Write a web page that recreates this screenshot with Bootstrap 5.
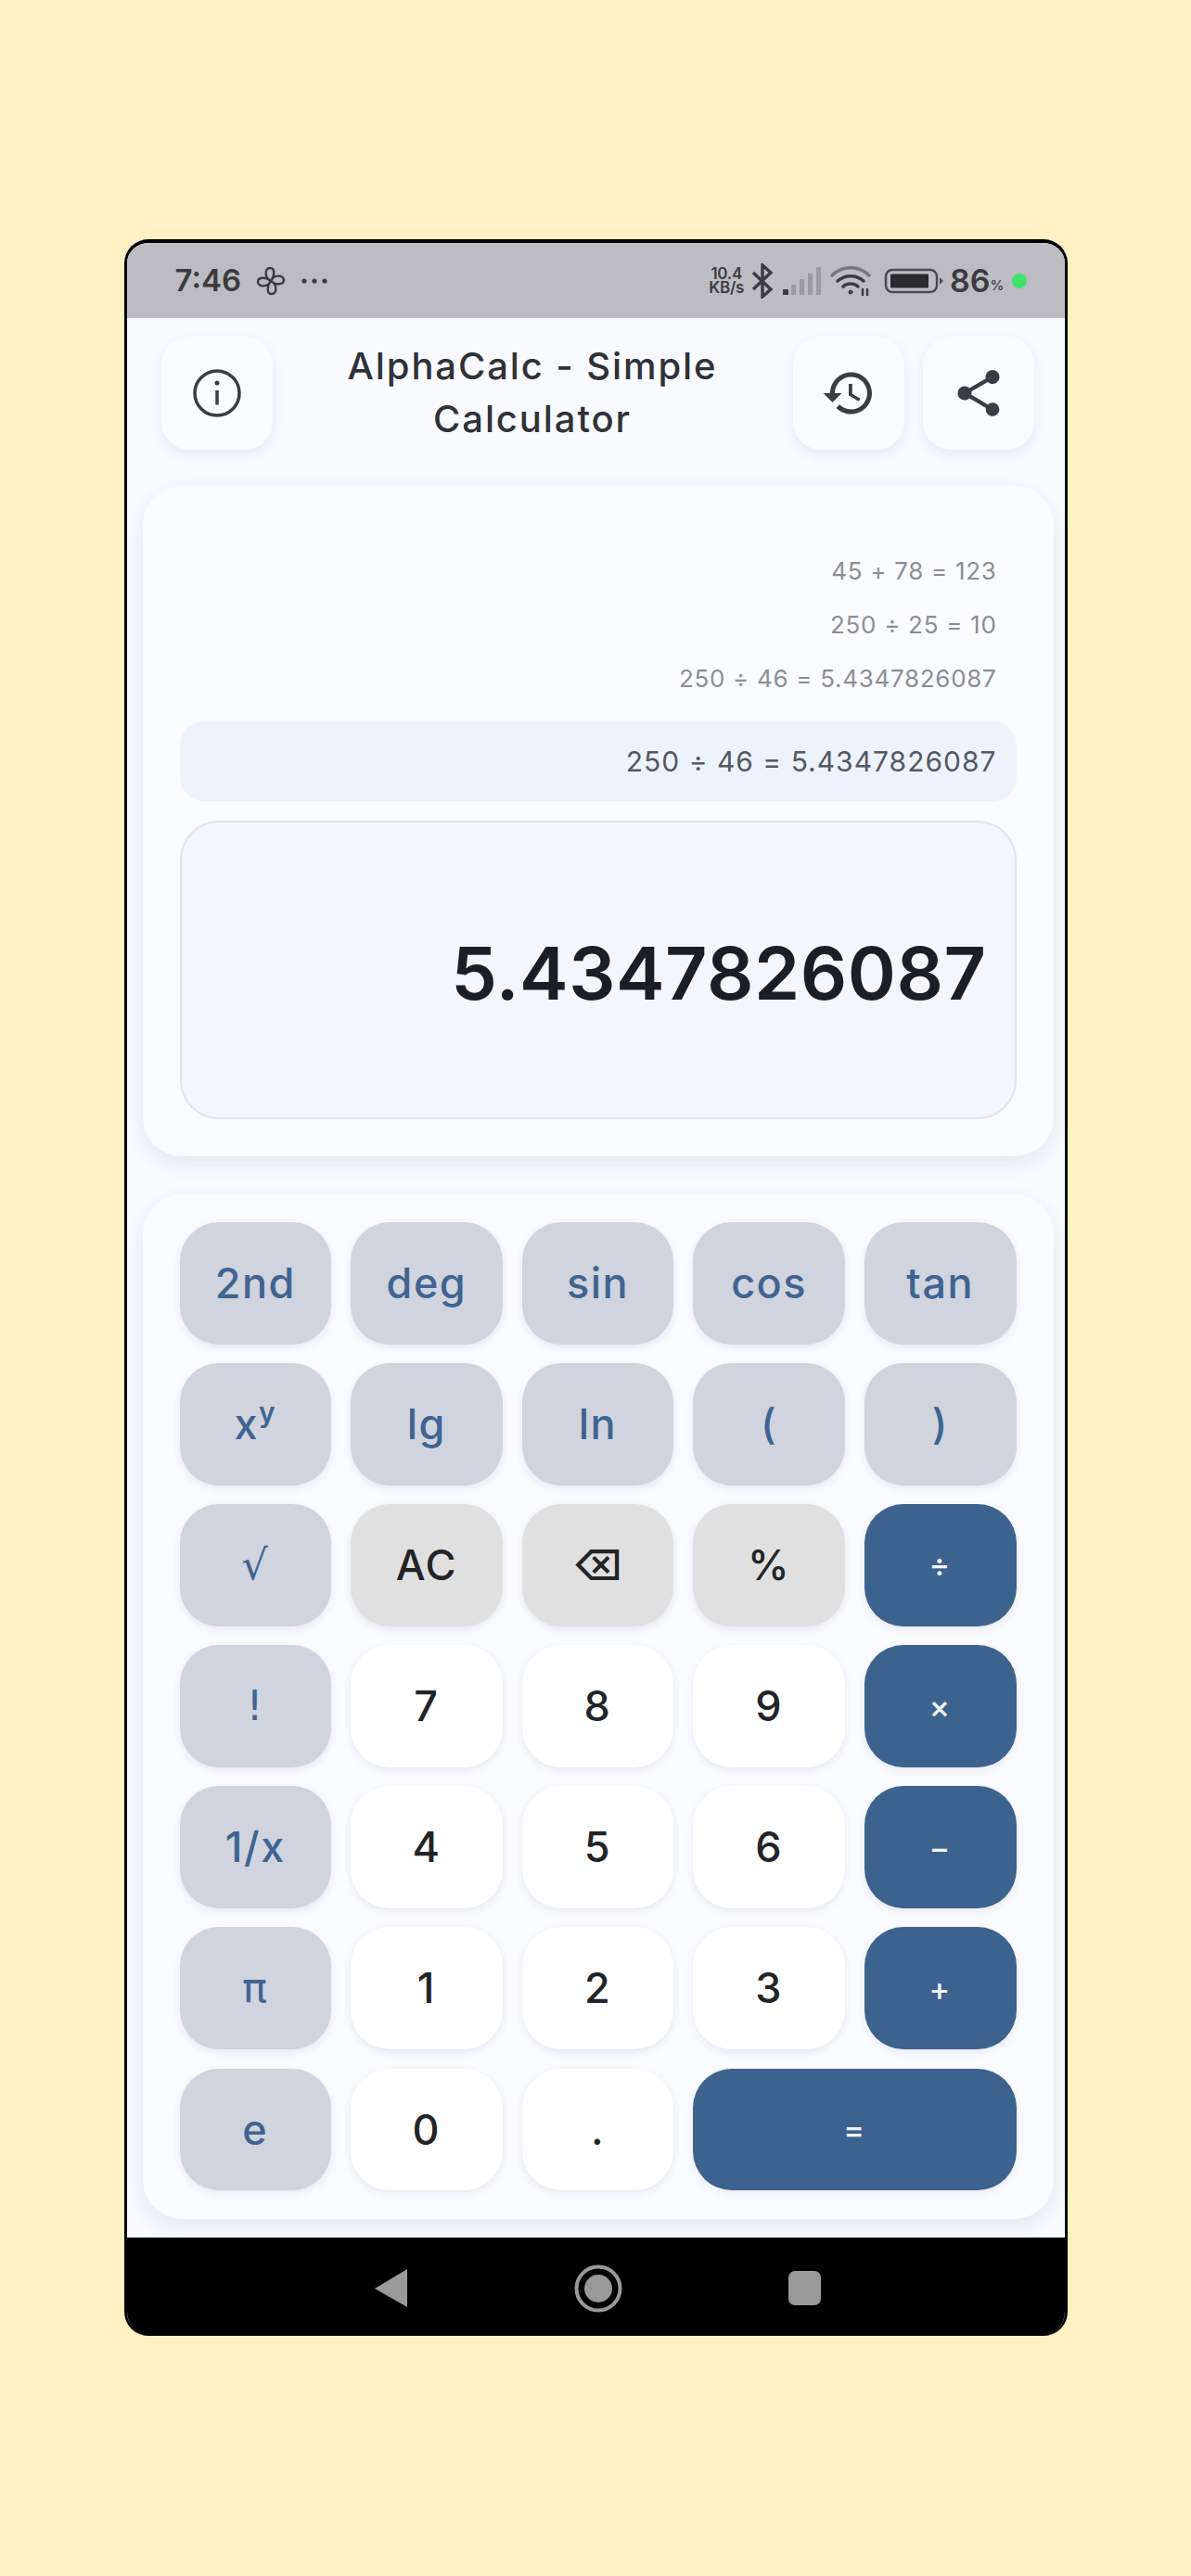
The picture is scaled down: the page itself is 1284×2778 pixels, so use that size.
<!DOCTYPE html>
<html lang="en">
<head>
    <meta charset="UTF-8">
    <meta name="viewport" content="width=device-width, initial-scale=1.0">
    <title>AlphaCalc - Simple Calculator</title>
    <link href="https://cdn.jsdelivr.net/npm/bootstrap@5.3.0/dist/css/bootstrap.min.css" rel="stylesheet">
    <style>
        body { background: #fff1c2; font-family: Inter, "Liberation Sans", sans-serif; padding-top: 258px; }
        .phone-frame { width: 1017px; height: 2261px; margin: 0 auto; background: #f9faff; border: solid #000; border-width: 4px 3px 0; border-radius: 26px; overflow: hidden; }

        .status-strip { height: 81px; background: #bdbcc2; color: #3b3b40; padding: 0 0 0 52px; font-weight: 600; font-size: 33px; }
        .status-right { margin-left: auto; padding-right: 41px; }
        .speed-text { font-size: 17px; line-height: 15px; font-weight: 600; text-align: center; letter-spacing: -.3px; }
        .pct-sign { font-size: 15px; font-weight: 500; margin-top: 9px; }
        .live-dot { width: 16px; height: 16px; background: #3fe26b; border-radius: 50%; }
        .bat-icon { margin-left: 13px; }
        .pct-num { margin-left: 5px; font-size: 34px; }

        .top-bar { padding: 20px 33px 0 37px; gap: 20px; }
        .round-tool { width: 120px; height: 122px; flex: none; padding: 0; border: 0; border-radius: 30px; background: #fafbff; box-shadow: 0 5px 14px rgba(40, 40, 70, .08); color: #3a3d42; }
        .round-tool:hover { background: #fafbff; }
        .app-title { font-size: 40px; line-height: 57px; font-weight: 500; color: #2f3237; letter-spacing: 1.9px; margin: -2px 0 0; }

        .panel-box { background: #fafbff; border: 0; border-radius: 42px; margin: 39px 12px 0 17px; box-shadow: 0 8px 22px rgba(40, 40, 70, .09); }
        .history-list { padding: 63px 21px 0 0; text-align: right; color: #8c8d93; font-size: 26px; line-height: 58px; letter-spacing: .7px; }
        .current-band { background: #ecf3fd; height: 86px; border-radius: 26px; margin-top: 17px; padding-right: 21px; font-size: 30px; color: #55585f; letter-spacing: 1px; }
        .result-box { height: 322px; margin-top: 21px; border: 2px solid #e2e3ec; border-radius: 42px; background: #f4f6fe; padding-right: 30px; font-size: 79px; font-weight: 600; color: #1c1e24; padding-top: 6px; letter-spacing: .5px; }

        .display-panel { padding: 0 40px 40px; height: 723px; }
        .keypad-panel { margin-top: 41px; height: 1105px; padding: 30px 40px 0; }
        .key-grid { display: grid; grid-template-columns: repeat(5, 1fr); grid-auto-rows: 131.5px; gap: 20.6px 21px; }

        .calc-key { border: 0; padding: 0; border-radius: 42px; font-size: 45px; font-weight: 500; letter-spacing: 1.5px; box-shadow: 0 3px 9px rgba(40, 40, 70, .09); }
        .key-sci, .key-sci:hover { background: #d0d4de; color: #3f6491; }
        .key-util, .key-util:hover { background: #e0e0e0; color: #232427; }
        .key-num, .key-num:hover { background: #fff; color: #232427; }
        .key-op, .key-op:hover { background: #3d628e; color: #f1f4f8; font-size: 34px; }
        .key-wide { grid-column: span 2; }
        .key-sci sup { font-size: 30px; top: -.6em; font-weight: 600; }
        .key-thin { font-family: "DejaVu Sans", sans-serif; font-weight: 400; }

        .nav-strip { height: 106px; background: #000; margin-top: 20px; padding-top: 3px; }
        .nav-back { margin-left: 267px; }
        .nav-home { margin-left: 180px; }
        .nav-recent { margin-left: 179px; width: 35px; height: 37px; background: #999; border-radius: 7px; }
    </style>
</head>
<body>

<div class="phone-frame">
    <div class="status-strip d-flex align-items-center">
        <span>7:46</span>
        <svg class="ms-3" width="32" height="34" viewBox="0 0 32 34" fill="none" stroke="#3b3b40" stroke-width="2.4"><path d="M16 17C9 14 9 3 15 3c6 0 5 9 1 14zM16 17c3-7 14-7 14 -1 0 6-10 5-14 1zM16 17c7 3 7 14 1 14-6 0-5-9-1-14zM16 17c-3 7-14 7-14 1 0-6 10-5 14-1z"/></svg>
        <svg class="ms-3" width="30" height="8" viewBox="0 0 30 8" fill="#3b3b40"><circle cx="4" cy="4" r="2.6"/><circle cx="15" cy="4" r="2.6"/><circle cx="26" cy="4" r="2.6"/></svg>

        <div class="status-right d-flex align-items-center">
            <div class="speed-text">10.4<br>KB/s</div>
            <svg class="ms-2" width="24" height="38" viewBox="0 0 24 38" fill="none" stroke="#3b3b40" stroke-width="3.4"><path d="M2 10l19 18-9 8V2l9 8L2 28"/></svg>
            <svg class="ms-2" width="44" height="36" viewBox="0 0 44 36"><rect x="2" y="27" width="6" height="6" fill="#3b3b40"/><g fill="#9b9aa0"><rect x="11" y="22" width="5" height="11"/><rect x="20" y="16" width="5" height="17"/><rect x="29" y="10" width="5" height="23"/><rect x="38" y="3" width="5" height="30"/></g></svg>
            <svg class="ms-2" width="46" height="34" viewBox="0 0 46 34" fill="none" stroke="#3b3b40" stroke-linecap="round"><path d="M3 11c11-11 29-11 40 0" stroke="#77767c" stroke-width="3.5"/><path d="M9 17c8-7 20-7 28 0" stroke-width="3.5"/><path d="M15 23c4-4 12-4 16 0" stroke-width="3.5"/><circle cx="23" cy="29" r="2" fill="#3b3b40"/><path d="M36 26v6M41 26v6" stroke-width="2.5"/></svg>
            <svg class="bat-icon" width="66" height="28" viewBox="0 0 66 28"><rect x="2" y="2" width="55" height="24" rx="7" fill="none" stroke="#4a4a50" stroke-width="2.5"/><rect x="7" y="6.5" width="41" height="15" rx="1" fill="#2b2b2f"/><path d="M60 10l4 4-4 4z" fill="#4a4a50"/></svg>
            <span class="pct-num lh-1">86</span><span class="pct-sign lh-1">%</span>
            <span class="live-dot ms-2"></span>
        </div>
    </div>

    <div class="top-bar d-flex align-items-center">
        <button class="btn round-tool" aria-label="Info">
            <svg width="60" height="60" viewBox="0 0 24 24" fill="none" stroke="currentColor" stroke-width="1.4"><circle cx="12" cy="12" r="9.6"/><path d="M12 10.8v6.2"/><circle cx="12" cy="7.6" r="1" fill="currentColor" stroke="none"/></svg>
        </button>
        <h1 class="app-title flex-grow-1 text-center">AlphaCalc - Simple<br>Calculator</h1>
        <button class="btn round-tool" aria-label="History">
            <svg width="60" height="60" viewBox="0 0 24 24" fill="currentColor"><path d="M13 3c-4.97 0-9 4.03-9 9H1l3.89 3.89.07.14L9 12H6c0-3.87 3.13-7 7-7s7 3.13 7 7-3.13 7-7 7c-1.93 0-3.68-.79-4.94-2.06l-1.42 1.42C8.27 19.99 10.51 21 13 21c4.97 0 9-4.03 9-9s-4.03-9-9-9zm-1 5v5l4.28 2.54.72-1.21-3.5-2.08V8H12z"/></svg>
        </button>
        <button class="btn round-tool" aria-label="Share">
            <svg width="60" height="60" viewBox="0 0 24 24" fill="currentColor"><path d="M18 16.08c-.76 0-1.44.3-1.96.77L8.91 12.7c.05-.23.09-.46.09-.7s-.04-.47-.09-.7l7.05-4.11c.54.5 1.25.81 2.04.81 1.66 0 3-1.34 3-3s-1.34-3-3-3-3 1.34-3 3c0 .24.04.47.09.7L8.04 9.81C7.5 9.31 6.79 9 6 9c-1.66 0-3 1.34-3 3s1.34 3 3 3c.79 0 1.5-.31 2.04-.81l7.12 4.16c-.05.21-.08.43-.08.65 0 1.61 1.31 2.92 2.92 2.92 1.61 0 2.92-1.31 2.92-2.92s-1.31-2.92-2.92-2.92z"/></svg>
        </button>
    </div>

    <div class="card panel-box display-panel">
        <div class="history-list">
            <div>45 + 78 = 123</div>
            <div>250 ÷ 25 = 10</div>
            <div>250 ÷ 46 = 5.4347826087</div>
        </div>
        <div class="current-band d-flex align-items-center justify-content-end">250 ÷ 46 = 5.4347826087</div>
        <div class="result-box d-flex align-items-center justify-content-end">5.4347826087</div>
    </div>

    <div class="card panel-box keypad-panel">
        <div class="key-grid" id="keyGrid"></div>
    </div>

    <div class="nav-strip d-flex align-items-center">
        <svg class="nav-back" width="35" height="41" viewBox="0 0 35 41" fill="#999"><path d="M35 0v41L0 21z"/></svg>
        <svg class="nav-home" width="52" height="52" viewBox="0 0 52 52"><circle cx="26" cy="26" r="23.5" fill="none" stroke="#999" stroke-width="4"/><circle cx="26" cy="26" r="15" fill="#999"/></svg>
        <div class="nav-recent"></div>
    </div>
</div>

<script>
const keys = [
    ["2nd", "sci"], ["deg", "sci"], ["sin", "sci"], ["cos", "sci"], ["tan", "sci"],
    ["x<sup>y</sup>", "sci"], ["lg", "sci"], ["ln", "sci"], ["(", "sci"], [")", "sci"],
    ["√", "sci key-thin"], ["AC", "util"], ["⌫", "util"], ["%", "util"], ["÷", "op"],
    ["!", "sci key-thin"], ["7", "num"], ["8", "num"], ["9", "num"], ["×", "op"],
    ["1/x", "sci"], ["4", "num"], ["5", "num"], ["6", "num"], ["−", "op"],
    ["π", "sci key-thin"], ["1", "num"], ["2", "num"], ["3", "num"], ["+", "op"],
    ["e", "sci"], ["0", "num"], [".", "num"], ["=", "op key-wide"]
];
const keyGrid = document.getElementById("keyGrid");
keys.forEach(([label, kind]) => {
    const key = document.createElement("button");
    key.className = "btn calc-key key-" + kind;
    key.innerHTML = label;
    keyGrid.appendChild(key);
});
</script>

<script src="https://cdn.jsdelivr.net/npm/bootstrap@5.3.0/dist/js/bootstrap.bundle.min.js"></script>
</body>
</html>
